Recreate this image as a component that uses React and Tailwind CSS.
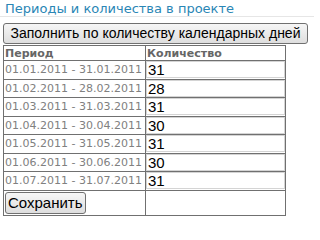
export default function App() {
  const rows = [
    ["01.01.2011 - 31.01.2011", "31"],
    ["01.02.2011 - 28.02.2011", "28"],
    ["01.03.2011 - 31.03.2011", "31"],
    ["01.04.2011 - 30.04.2011", "30"],
    ["01.05.2011 - 31.05.2011", "31"],
    ["01.06.2011 - 30.06.2011", "30"],
    ["01.07.2011 - 31.07.2011", "31"],
  ];

  return (
    <div className="w-[314px] h-[220px] bg-white overflow-hidden">
      <div className="px-[5px] pt-[1px] h-[17px] border-b border-[#e6e6e6] text-[13px] leading-[15px] text-[#2a86b5] font-['DejaVu_Sans',sans-serif]">
        Периоды и количества в проекте
      </div>
      <div className="pl-[3px] pt-[3px]">
        <button className="h-[21px] w-[305px] px-0 whitespace-nowrap rounded-[3px] border border-[#707070] bg-gradient-to-b from-[#f6f6f6] to-[#dedede] text-[14px] leading-[18px] text-black font-['Liberation_Sans',sans-serif]">
          Заполнить по количеству календарных дней
        </button>
        <table className="mt-[1px] w-[283px] border-collapse border border-[#707070] font-['DejaVu_Sans',sans-serif]">
          <thead>
            <tr className="h-[15px]">
              <th className="w-[142px] border border-[#707070] p-0 pl-[1px] text-left text-[11px] leading-[13px] font-bold text-[#666]">
                Период
              </th>
              <th className="border border-[#707070] p-0 pl-[1px] text-left text-[11px] leading-[13px] font-bold text-[#666]">
                Количество
              </th>
            </tr>
          </thead>
          <tbody>
            {rows.map(([period, count]) => (
              <tr key={period} className="h-[18.5px]">
                <td className="border border-[#707070] p-0 pl-[1px] text-[11px] leading-[13px] text-[#808080] whitespace-nowrap">
                  {period}
                </td>
                <td className="border border-[#707070] p-0">
                  <input
                    defaultValue={count}
                    className="block w-full h-[17px] border border-[#d4d4d4] bg-white px-[1px] text-[15px] leading-[17px] text-black font-['Liberation_Sans',sans-serif] outline-none"
                  />
                </td>
              </tr>
            ))}
            <tr className="h-[25px]">
              <td className="border border-[#707070] p-0 pl-[1px]">
                <button className="h-[22px] px-[2px] rounded-[3px] border border-[#707070] bg-gradient-to-b from-[#f6f6f6] to-[#dedede] text-[15px] leading-[18px] text-black font-['Liberation_Sans',sans-serif]">
                  Сохранить
                </button>
              </td>
              <td className="border border-[#707070] p-0"></td>
            </tr>
          </tbody>
        </table>
      </div>
    </div>
  );
}
